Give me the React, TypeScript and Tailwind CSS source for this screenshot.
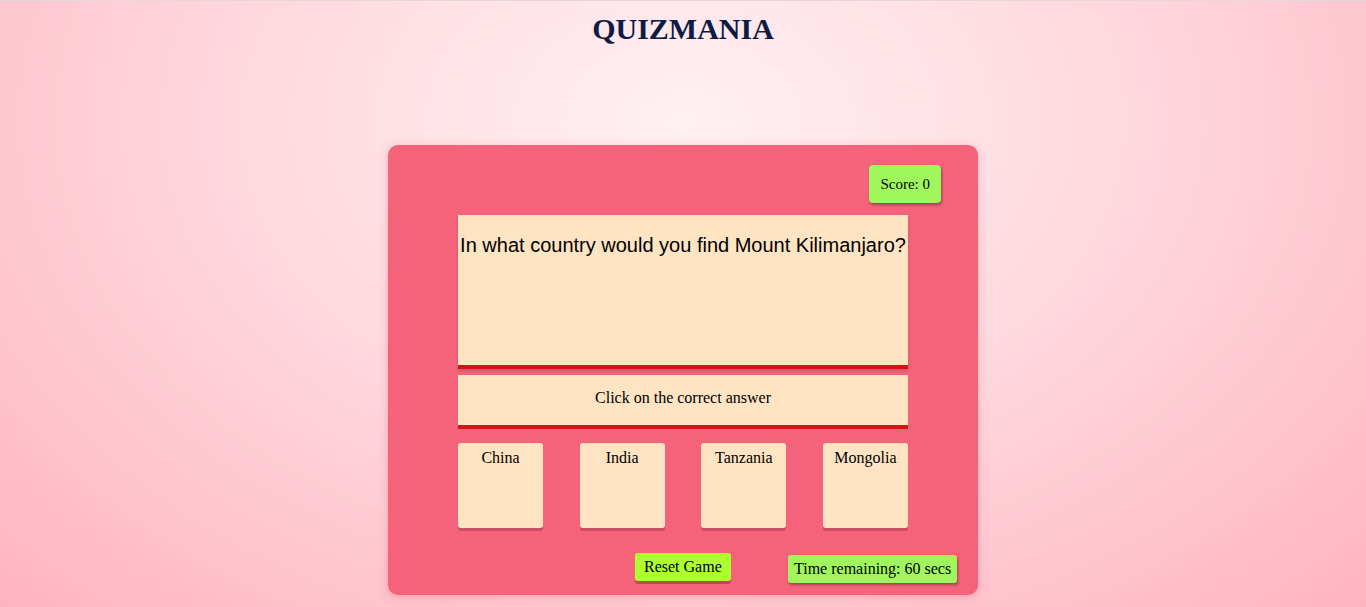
import React from 'react';

const answers = ['China', 'India', 'Tanzania', 'Mongolia'];

const App: React.FC = () => {
  return (
    <div className="h-[607px] overflow-hidden border-t border-[#e6d6d8] bg-[radial-gradient(ellipse_at_50%_20%,#fff0f2_0%,#ffd9df_45%,#ffb4c0_100%)] font-['Liberation_Serif',serif]">
      <h1 className="pt-[10px] text-center text-[30px] font-bold leading-[36px] text-[#0c1c45]">QUIZMANIA</h1>

      <div className="mx-auto mt-[98px] flex h-[450px] w-[590px] flex-col rounded-[10px] bg-[#f5637a] px-[70px] pt-5 shadow-[0_2px_10px_rgba(230,90,110,0.35)]">
        {/* score */}
        <div className="mr-[-33px] flex justify-end">
          <div className="rounded-[4px] bg-[#a0f75c] px-[11px] py-[9px] text-[15px] leading-[20px] text-black shadow-[1px_2px_3px_rgba(0,0,0,0.35)]">
            Score: 0
          </div>
        </div>

        {/* question */}
        <div className="mt-3 h-[154px] border-b-4 border-[#cf1717] bg-[#ffe4c4] pt-[18px] text-center font-['Liberation_Sans',sans-serif] text-[20px] leading-[24px] text-black shadow-[0_2px_3px_rgba(0,0,0,0.15)]">
          In what country would you find Mount Kilimanjaro?
        </div>

        <div className="mt-[6px] flex h-[54px] items-center justify-center border-b-4 border-[#cf1717] bg-[#ffe4c4] pb-1 text-[16px] text-black">
          Click on the correct answer
        </div>

        {/* answers */}
        <div className="mt-[14px] flex justify-between">
          {answers.map((a) => (
            <div
              key={a}
              className="h-[85px] w-[85px] rounded-[3px] bg-[#ffe4c4] pt-[5px] text-center text-[16px] leading-[20px] text-black shadow-[0_3px_0_rgba(170,60,80,0.55)]"
            >
              {a}
            </div>
          ))}
        </div>

        {/* bottom */}
        <div className="relative mt-[25px] h-[32px]">
          <div className="absolute left-[177px] top-0 whitespace-nowrap rounded-[3px] bg-[#adff2f] px-[9px] py-[4px] text-[16px] leading-[20px] text-black shadow-[0_3px_0_rgba(170,60,80,0.7)]">
            Reset Game
          </div>
          <div className="absolute left-[330px] top-[2px] whitespace-nowrap rounded-[3px] bg-[#a0f75c] px-[6px] py-[4px] text-[16px] leading-[20px] text-black shadow-[1px_2px_3px_rgba(0,0,0,0.35)]">
            Time remaining: 60 secs
          </div>
        </div>
      </div>
    </div>
  );
};

export default App;
